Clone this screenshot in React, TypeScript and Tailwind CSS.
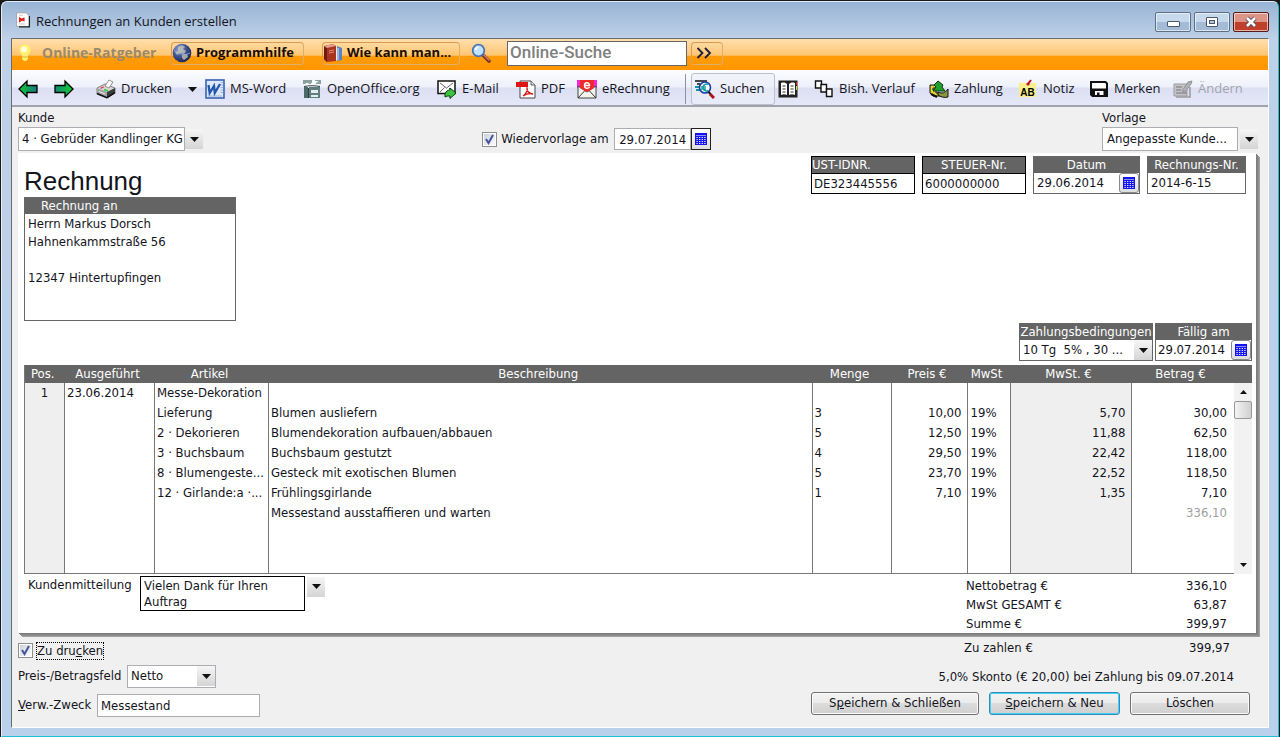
import type { ReactNode } from "react";
import { clsx } from "clsx";

/* ── Icons ── */

function Svg({ children, className = "h-5 w-5" }: { children: ReactNode; className?: string }) {
  return (
    <svg viewBox="0 0 20 20" className={clsx("shrink-0", className)} aria-hidden="true">
      {children}
    </svg>
  );
}

function Caret({ className = "h-[5px] w-[9px]" }: { className?: string }) {
  return (
    <svg viewBox="0 0 9 5" className={clsx("shrink-0", className)} aria-hidden="true">
      <path d="M0 0h9L4.5 5z" fill="#111" />
    </svg>
  );
}

const WindowIcon = () => (
  <Svg className="h-4 w-4">
    <path d="M2 1h12l4 4v13H2z" fill="#fff" stroke="#999" />
    <path d="M18 5v13.500H5" fill="none" stroke="#222" strokeWidth="1.6" />
    <path d="M5 6l3 2 4-1v5l-3-1-4 2z" fill="#d22" />
    <path d="M5 15h8M5 4h5" stroke="#bbb" />
  </Svg>
);

const BulbIcon = () => (
  <Svg>
    <circle cx="9" cy="7" r="5.500" fill="#fff36b" />
    <circle cx="8" cy="6.500" r="3" fill="#fffde0" />
    <path d="M6 11h6v5l-2 2H8l-2-2z" fill="#fbf07a" />
    <path d="M6 14h6" stroke="#e0b52c" />
  </Svg>
);

const GlobeIcon = () => (
  <Svg>
    <defs>
      <radialGradient id="globe" cx="0.35" cy="0.3" r="0.8">
        <stop offset="0" stopColor="#8fa4dd" />
        <stop offset="0.5" stopColor="#3f4f8c" />
        <stop offset="1" stopColor="#151d4a" />
      </radialGradient>
    </defs>
    <circle cx="10" cy="10" r="9.3" fill="url(#globe)" />
    <path d="M6 4l4-2 3 2-2 2 3 2-2 3-4-1-3 2-2-3 3-1zM10 12l5-1 1 3-4 3-2-2z" fill="#c9c9b4" opacity="0.75" />
    <path d="M2 7c4 4 11 6 16 3" fill="none" stroke="#9fb0e8" strokeWidth="0.8" />
  </Svg>
);

const BooksIcon = () => (
  <Svg>
    <path d="M1 3l9-2 3 2v15l-9 1-3-3z" fill="#a8331f" />
    <path d="M1 3l3 2v14l-3-3z" fill="#6e1c10" />
    <path d="M1 3l9-2 3 2-9 2z" fill="#e0a08b" />
    <path d="M13 4l1-1v14l-1 1z" fill="#f3e7d8" />
    <path d="M14 3l5 2v12l-5 1z" fill="#5b83c4" />
    <path d="M15 5v12" stroke="#dbe6f7" />
    <path d="M6 8l5-1M6 10l5-1" stroke="#d98f7c" />
  </Svg>
);

const MagnifierIcon = () => (
  <Svg>
    <path d="M12 12l6 6" stroke="#7a3428" strokeWidth="3.6" strokeLinecap="round" />
    <path d="M13 12l5 5" stroke="#d88a70" strokeWidth="1.2" strokeLinecap="round" />
    <circle cx="7.5" cy="7.5" r="5.8" fill="#bfe4fb" stroke="#4c74b5" strokeWidth="1.8" />
    <path d="M4.5 7a3.4 3.4 0 0 1 3-3" fill="none" stroke="#fff" strokeWidth="1.6" />
  </Svg>
);

const ArrowIcon = ({ flip }: { flip?: boolean }) => (
  <Svg>
    <defs>
      <linearGradient id={flip ? "arrowR" : "arrowL"} x1="0" y1="0" x2="1" y2="0">
        <stop offset="0" stopColor={flip ? "#148a78" : "#12c832"} />
        <stop offset="1" stopColor={flip ? "#12d030" : "#147a80"} />
      </linearGradient>
    </defs>
    <path
      d={flip ? "M19 10L11 2v4.5H1v7h10V18z" : "M1 10l8-8v4.5h10v7H9V18z"}
      fill={flip ? "url(#arrowR)" : "url(#arrowL)"}
      stroke="#000"
      strokeWidth="1.3"
    />
  </Svg>
);

const PrinterIcon = () => (
  <Svg>
    <path d="M1 9l8-4 10 4v5l-8 5-10-4z" fill="#d6d6d6" stroke="#666" strokeWidth="0.8" />
    <path d="M1 9l10 4v5L1 14z" fill="#a2a2a2" />
    <path d="M11 13l8-4v5l-8 5z" fill="#3b3b3b" />
    <path d="M1 14.500l10 4.200 8-5" fill="none" stroke="#111" strokeWidth="1.4" />
    <path d="M9 7l4-6 4 2-4 6z" fill="#fff" stroke="#777" strokeWidth="0.8" />
    <path d="M4 9l3-1.500 1.500.6-3 1.700z" fill="#e33" />
    <path d="M8 10.500l4 1.500" stroke="#2c4" strokeWidth="1.6" />
    <path d="M3 12.500l6 2.500" stroke="#eee" strokeWidth="1" />
  </Svg>
);

const WordIcon = () => (
  <Svg>
    <rect x="1" y="1" width="18" height="18" fill="#dde8f8" stroke="#3a62b0" strokeWidth="1.6" />
    <path d="M15.500 3.500h2.500M15.500 6h2.500M15.500 8.500h2.500M15.500 11h2.500M15.500 13.500h2.500M3 17h14" stroke="#9db4df" />
    <path d="M3.500 6l1.200 8L9 7l.8 7L15 5" fill="none" stroke="#2456ae" strokeWidth="2.300" />
  </Svg>
);

const OpenOfficeIcon = () => (
  <Svg>
    <path d="M1 1h9v4H1zM13 1h6v4h-5z" fill="#8aa19d" />
    <path d="M2 6c3-3 5-2 6 0 2-4 6-5 9-3-2 0-4 1-5 3 2 0 4 0 6 1-4 0-8 1-12 1z" fill="#fff" />
    <path d="M2 8h4v11H2z" fill="#4c6a68" />
    <path d="M7 8h11v11H7z" fill="#5f7f7c" />
    <path d="M9 11h7v3H9zM9 16h7v2H9z" fill="#e6eeed" />
    <path d="M2 7.500c4-1 12-1 16 0M6.500 9v10" fill="none" stroke="#27403f" />
  </Svg>
);

const MailIcon = () => (
  <Svg>
    <rect x="1" y="2" width="17" height="12.500" fill="#fff" stroke="#111" strokeWidth="1.500" />
    <path d="M3 4l6.500 5L16 4M3 13l4.500-4.500M16 13l-4-4" fill="none" stroke="#666" />
    <path d="M8 15c1-3 3-4 5-4V9l6 5-6 5.500V17c-2 0-3 0-5 1z" fill="#3fc441" stroke="#073a07" />
  </Svg>
);

const PdfIcon = () => (
  <Svg>
    <path d="M4 2h11l4 4v13H4z" fill="#fff" stroke="#444" />
    <path d="M15 2v4h4" fill="#ddd" stroke="#444" strokeWidth="0.8" />
    <path d="M0 3h12v5H0z" fill="#e01515" />
    <path d="M7 17c3-2 5-6 4-8-1 3 3 6 6 6-3-1-7 0-10 2z" fill="none" stroke="#d81818" strokeWidth="1.400" />
  </Svg>
);

const ERechnungIcon = () => (
  <Svg>
    <path d="M0 1h20v8H0z" fill="#f028d8" />
    <path d="M1 7l9 6 9-6v12H1z" fill="#f4f4ee" stroke="#444" />
    <path d="M3 1h14v8l-7 4-7-4z" fill="#ef2a2a" />
    <path d="M7.500 6.500h5c0-3.600-5-3.600-5 0s3.800 3.200 5 1.600" fill="none" stroke="#fff" strokeWidth="1.400" />
    <path d="M1 19l6.500-7M19 19l-6.500-7" stroke="#333" />
  </Svg>
);

const SearchEuroIcon = () => (
  <Svg>
    <path d="M0 2h12M2 5h3" stroke="#111" strokeWidth="1.500" />
    <path d="M0 8h5M1 11h4" stroke="#11989e" strokeWidth="1.800" />
    <circle cx="10" cy="8.500" r="5.500" fill="#fff" stroke="#1b3aa8" strokeWidth="1.600" />
    <path d="M13 5.500c-2-1-5 0-5 3s3 4 5 3M6 8h5M6 10h5" fill="none" stroke="#12a0a0" strokeWidth="1.500" />
    <path d="M13.500 13l2 2" stroke="#111" strokeWidth="2" />
    <path d="M15 15l4 4" stroke="#a81818" strokeWidth="3" />
  </Svg>
);

const BookIcon = () => (
  <Svg>
    <rect x="0.500" y="1.500" width="19" height="17" fill="#222" />
    <path d="M3 4c3-1 5 0 6 1v11c-2-1-4-1-6 0zM17 4c-3-1-5 0-6 1v11c2-1 4-1 6 0z" fill="#fff" />
    <path d="M4.500 7h3M4.500 10h3M4.500 13h3M12.500 7h3M12.500 10h3M12.500 13h3" stroke="#333" strokeWidth="1.200" />
    <path d="M18.500 3v3" stroke="#d22" />
    <path d="M18.500 7v4" stroke="#dd2" />
  </Svg>
);

const HistoryIcon = () => (
  <Svg>
    <path d="M1.500 2h6v7h-6z" fill="#fff" stroke="#111" strokeWidth="1.400" />
    <path d="M7 5.500h5.500v7.500H7z" fill="#fff" stroke="#111" strokeWidth="1.400" />
    <path d="M12.500 10H18v7.500h-5.500z" fill="#fff" stroke="#111" strokeWidth="1.400" />
  </Svg>
);

const PaymentIcon = () => (
  <Svg>
    <path d="M1 6h6v3H4v2h3v3h4l2 3H4l-3-3z" fill="#e6d338" stroke="#111" />
    <path d="M9 2l5 4-1 2 3 4H4l3-4-2-2z" fill="#1fa02c" stroke="#0a3a0e" />
    <path d="M9 13c4 2 7 1 10-3v8c-4 1-7 0-10-2z" fill="#8d9a3b" stroke="#111" />
    <path d="M2 15l6 3" stroke="#111" strokeWidth="2" />
  </Svg>
);

const NoteIcon = () => (
  <Svg>
    <rect x="1" y="4" width="17" height="14" fill="#f8f08a" />
    <path d="M13 1l-3 4" stroke="#c01228" strokeWidth="2" />
    <circle cx="10" cy="5" r="1.600" fill="#c01228" />
    <text x="9.500" y="16.500" textAnchor="middle" fontSize="10" fontWeight="700" fontFamily="Liberation Sans, sans-serif">
      AB
    </text>
  </Svg>
);

const DiskIcon = () => (
  <Svg>
    <path d="M2 3h14.500L18 4.500V17H3.500L2 15.500z" fill="#fff" stroke="#111" strokeWidth="2" />
    <path d="M3 9.500h14V17H3z" fill="#111" />
    <path d="M6 12h8.500v4H6z" fill="#fff" />
    <path d="M8 13.500h2.500V16H8z" fill="#111" />
  </Svg>
);

const EditIcon = () => (
  <Svg>
    <path d="M1 5h13v12H1z" fill="#c4c4c8" stroke="#9b9b9f" />
    <path d="M3 8h6M3 11h5M3 14h11" stroke="#8e8e92" strokeWidth="1.400" />
    <path d="M9 12l6-9 4-1-1 3-6 8z" fill="#b2b2b6" stroke="#939397" />
    <path d="M17 8v10H3" fill="none" stroke="#9b9b9f" strokeWidth="1.600" />
  </Svg>
);

const CalendarIcon = () => (
  <svg viewBox="0 0 12 12" className="h-3 w-3" aria-hidden="true">
    <rect width="12" height="12" fill="#1414f0" />
    <path
      d="M1.500 4.500h9M1.500 6.500h9M1.500 8.500h9M1.500 10.500h9"
      stroke="#fff"
      strokeDasharray="1.200 1.400"
      strokeWidth="1"
    />
    <path d="M1 2.500h10" stroke="#8f8fff" />
  </svg>
);

/* ── Form pieces ── */

function Select({ id, value, className }: { id: string; value: string; className?: string }) {
  return (
    <select id={id} className={clsx("appearance-none bg-white outline-none", className)}>
      <option>{value}</option>
    </select>
  );
}

function DropArrow({ label }: { label: string }) {
  return (
    <button
      type="button"
      aria-label={label}
      className="flex h-5 w-[18px] shrink-0 items-center justify-center bg-gradient-to-b from-[#f6f6f6] to-[#d4d4d4]"
    >
      <Caret />
    </button>
  );
}

function CalendarButton({ className }: { className?: string }) {
  return (
    <button
      type="button"
      aria-label="Kalender öffnen"
      className={clsx(
        "flex w-5 shrink-0 items-center justify-center border bg-gradient-to-b from-white to-[#dcdcdc]",
        className,
      )}
    >
      <CalendarIcon />
    </button>
  );
}

function CheckBox({ id }: { id: string }) {
  return (
    <span className="relative flex h-[15px] w-[15px] shrink-0">
      <input
        id={id}
        type="checkbox"
        defaultChecked
        className="h-full w-full appearance-none border border-[#8e8f8f] bg-gradient-to-br from-[#c9d0d8] to-white shadow-[inset_0_0_0_1px_#fff]"
      />
      <svg viewBox="0 0 15 15" className="pointer-events-none absolute inset-0" aria-hidden="true">
        <path d="M4 7l2.500 4L11 3" fill="none" stroke="#44549c" strokeWidth="2" />
      </svg>
    </span>
  );
}

type FieldBoxProps = {
  id: string;
  label: string;
  align?: string;
  border?: string;
  className: string;
  children: ReactNode;
};

function FieldBox({ id, label, align = "text-center", border = "border-[#666]", className, children }: FieldBoxProps) {
  return (
    <div className={clsx("border", border, className)}>
      <label htmlFor={id} className={clsx("block h-4 overflow-hidden bg-[#646464] leading-4 text-white", align)}>
        {label}
      </label>
      <div className="flex h-5 bg-white">{children}</div>
    </div>
  );
}

type ToolProps = { icon: ReactNode; label?: string; title?: string; className: string; disabled?: boolean };

function Tool({ icon, label, title, className, disabled }: ToolProps) {
  return (
    <button
      type="button"
      aria-label={title}
      disabled={disabled}
      className={clsx("flex h-8 shrink-0 items-center gap-[5px] whitespace-nowrap", disabled && "text-[#a4a5ab]", className)}
    >
      {icon}
      {label}
    </button>
  );
}

/* ── Data ── */

type Line = {
  pos?: string;
  date?: string;
  item?: string;
  text?: string;
  qty?: string;
  price?: string;
  rate?: string;
  tax?: string;
  total?: string;
  muted?: boolean;
};

const lines: Line[] = [
  { pos: "1", date: "23.06.2014", item: "Messe-Dekoration" },
  { item: "Lieferung", text: "Blumen ausliefern", qty: "3", price: "10,00", rate: "19%", tax: "5,70", total: "30,00" },
  { item: "2 · Dekorieren", text: "Blumendekoration aufbauen/abbauen", qty: "5", price: "12,50", rate: "19%", tax: "11,88", total: "62,50" },
  { item: "3 · Buchsbaum", text: "Buchsbaum gestutzt", qty: "4", price: "29,50", rate: "19%", tax: "22,42", total: "118,00" },
  { item: "8 · Blumengeste...", text: "Gesteck mit exotischen Blumen", qty: "5", price: "23,70", rate: "19%", tax: "22,52", total: "118,50" },
  { item: "12 · Girlande:a ·...", text: "Frühlingsgirlande", qty: "1", price: "7,10", rate: "19%", tax: "1,35", total: "7,10" },
  { text: "Messestand ausstaffieren und warten", total: "336,10", muted: true },
];

const columns = [
  { label: "Pos.", width: "w-10" },
  { label: "Ausgeführt", width: "w-[90px]" },
  { label: "Artikel", width: "w-[114px]" },
  { label: "Beschreibung", width: "" },
  { label: "Menge", width: "w-[79px]" },
  { label: "Preis €", width: "w-[76px]" },
  { label: "MwSt", width: "w-[43px]" },
  { label: "MwSt. €", width: "w-[121px]" },
  { label: "Betrag €", width: "w-[103px]" },
];

const totals = [
  ["Nettobetrag €", "336,10"],
  ["MwSt GESAMT €", "63,87"],
  ["Summe €", "399,97"],
];

/* ── Window parts ── */

const captionButton =
  "flex h-5 w-9 items-center justify-center rounded-[2px] border shadow-[inset_0_0_0_1px_rgba(255,255,255,0.6)]";
const captionBlue = "border-[#5c6f87] bg-[linear-gradient(#c6d8ec_50%,#a3bbd6_50%)]";

function TitleBar() {
  return (
    <header className="flex h-9 items-center px-[9px] pl-[13px] font-['Open_Sans','Noto_Sans',sans-serif] text-[13px]">
      <WindowIcon />
      <h1 className="ml-[5px] flex-1 pt-1">Rechnungen an Kunden erstellen</h1>
      <div className="flex gap-[3px] pt-1">
        <button type="button" aria-label="Minimieren" className={clsx(captionButton, captionBlue)}>
          <span className="mt-1 h-[6px] w-[13px] rounded-[1px] border border-[#4c5668] bg-white" />
        </button>
        <button type="button" aria-label="Maximieren" className={clsx(captionButton, captionBlue)}>
          <span className="flex h-[10px] w-3 items-center justify-center rounded-[1px] border border-[#4c5668] bg-white">
            <span className="h-1 w-[6px] border border-[#4c5668] bg-[#b4c8e0]" />
          </span>
        </button>
        <button
          type="button"
          aria-label="Schließen"
          className={clsx(captionButton, "border-[#5a1a14] bg-[linear-gradient(#dc9486_50%,#c0402c_50%)]")}
        >
          <svg viewBox="0 0 14 12" className="h-3 w-[14px]" aria-hidden="true">
            <path d="M3 2l8 8M11 2l-8 8" stroke="#4c4c5c" strokeWidth="4.500" />
            <path d="M3 2l8 8M11 2l-8 8" stroke="#fff" strokeWidth="2.600" />
          </svg>
        </button>
      </div>
    </header>
  );
}

const helpButton =
  "flex h-[23px] items-center gap-1 rounded-[4px] border border-[#dd9a52] border-b-[#dcae70] border-r-[#dcae70] text-[#1a0d00]";

function HelpBar() {
  return (
    <div className="flex h-[31px] items-center bg-[linear-gradient(#ffdfae_0%,#ffc673_52%,#ff9c08_56%,#ff9600_100%)] pl-1 pb-[3px] font-['Open_Sans','Noto_Sans',sans-serif] text-[13px] font-bold">
      <BulbIcon />
      <span className="ml-[6px] w-[129px] text-sm text-[#9a8a6c]">Online-Ratgeber</span>
      <button type="button" className={clsx(helpButton, "w-[133px]")}>
        <GlobeIcon />
        Programmhilfe
      </button>
      <button type="button" className={clsx(helpButton, "ml-[18px] w-[138px]")}>
        <BooksIcon />
        Wie kann man...
      </button>
      <span className="ml-[11px] mr-4">
        <MagnifierIcon />
      </span>
      <input
        type="search"
        aria-label="Online-Suche"
        placeholder="Online-Suche"
        className="h-[25px] w-[180px] border border-[#66666b] bg-white px-[2px] font-[Roboto,sans-serif] text-[17px] font-medium outline-none placeholder:text-[#808080]"
      />
      <button type="button" aria-label="Suche starten" className={clsx(helpButton, "ml-1 w-8 pl-1")}>
        <svg viewBox="0 0 16 12" className="h-3 w-4" aria-hidden="true">
          <path d="M1.500 1l5 5-5 5M9 1l5 5-5 5" fill="none" stroke="#1c1c3c" strokeWidth="1.800" />
        </svg>
      </button>
    </div>
  );
}

function ToolBar() {
  return (
    <nav
      aria-label="Werkzeuge"
      className="flex h-[37px] items-center border-b-2 border-[#a0a3ac] bg-[linear-gradient(#fdfdff_0%,#eef0fa_48%,#dcdff2_52%,#e4e8f8_100%)] pl-[6px] pt-[3px] font-['Open_Sans','Noto_Sans',sans-serif] text-[13px]"
    >
      <Tool icon={<ArrowIcon />} title="Zurück" className="w-9" />
      <Tool icon={<ArrowIcon flip />} title="Vor" className="w-[42px]" />
      <Tool icon={<PrinterIcon />} label="Drucken" className="w-[92px]" />
      <Tool icon={<Caret />} title="Druckoptionen" className="w-[17px]" />
      <Tool icon={<WordIcon />} label="MS-Word" className="w-[97px]" />
      <Tool icon={<OpenOfficeIcon />} label="OpenOffice.org" className="w-[135px]" />
      <Tool icon={<MailIcon />} label="E-Mail" className="w-[79px]" />
      <Tool icon={<PdfIcon />} label="PDF" className="w-[61px]" />
      <Tool icon={<ERechnungIcon />} label="eRechnung" className="w-[108px]" />
      <span className="h-[30px] w-px bg-[#8d919c]" />
      <Tool
        icon={<SearchEuroIcon />}
        label="Suchen"
        className="ml-[5px] w-[84px] rounded-[3px] border border-[#bcbfcc] bg-[#eceef8]/60 pl-[3px]"
      />
      <Tool icon={<BookIcon />} title="Adressbuch" className="ml-[3px] w-9" />
      <Tool icon={<HistoryIcon />} label="Bish. Verlauf" className="w-[115px]" />
      <Tool icon={<PaymentIcon />} label="Zahlung" className="w-[89px]" />
      <Tool icon={<NoteIcon />} label="Notiz" className="w-[71px]" />
      <Tool icon={<DiskIcon />} label="Merken" className="w-[84px]" />
      <Tool icon={<EditIcon />} label="Ändern" className="w-20" disabled />
    </nav>
  );
}

function CustomerRow() {
  return (
    <section className="flex items-end pl-[6px] pr-[10px] pt-[3px]">
      <div>
        <label htmlFor="kunde" className="block leading-4">
          Kunde
        </label>
        <div className="mt-px flex items-center">
          <Select id="kunde" value="4 · Gebrüder Kandlinger KG" className="h-6 w-[167px] border border-[#abadb3] pl-[3px]" />
          <DropArrow label="Kunden anzeigen" />
        </div>
      </div>
      <div className="flex-[5]" />
      <div className="flex h-6 items-center">
        <CheckBox id="wiedervorlage" />
        <label htmlFor="wiedervorlage" className="ml-1 w-[113px] whitespace-nowrap">
          Wiedervorlage am
        </label>
        <input
          aria-label="Wiedervorlage Datum"
          defaultValue="29.07.2014"
          className="h-[22px] w-[77px] border border-[#abadb3] bg-white px-1 outline-none"
        />
        <CalendarButton className="h-[22px] border-[#222]" />
      </div>
      <div className="flex-[7]" />
      <div>
        <label htmlFor="vorlage" className="block leading-4">
          Vorlage
        </label>
        <div className="mt-px flex items-center gap-[2px]">
          <Select id="vorlage" value="Angepasste Kunde..." className="h-6 w-[136px] border border-[#abadb3] px-1" />
          <DropArrow label="Vorlagen anzeigen" />
        </div>
      </div>
    </section>
  );
}

function PaperHead() {
  return (
    <div className="flex justify-between">
      <div className="w-[212px]">
        <h2 className="h-11 pt-2 font-['Liberation_Sans',Arial,sans-serif] text-[26px] leading-10">Rechnung</h2>
        <div className="border border-[#666]">
          <label htmlFor="adresse" className="block h-4 bg-[#646464] pl-4 leading-4 text-white">
            Rechnung an
          </label>
          <textarea
            id="adresse"
            defaultValue={"Herrn Markus Dorsch\nHahnenkammstraße 56\n\n12347 Hintertupfingen"}
            className="block h-[106px] w-full resize-none overflow-hidden bg-white px-[3px] py-px leading-[18px] outline-none"
          />
        </div>
      </div>

      <div className="flex flex-col items-end">
        <div className="mr-[6px] mt-[3px] flex gap-[7px]">
          <FieldBox id="ustid" label="UST-IDNR." align="text-left" border="border-black" className="w-[104px]">
            <input id="ustid" defaultValue="DE323445556" className="w-full border-t border-black px-[2px] outline-none" />
          </FieldBox>
          <FieldBox id="steuer" label="STEUER-Nr." border="border-black" className="w-[104px]">
            <input id="steuer" defaultValue="6000000000" className="w-full border-t border-black px-[2px] outline-none" />
          </FieldBox>
          <FieldBox id="datum" label="Datum" className="w-[107px]">
            <input id="datum" defaultValue="29.06.2014" className="min-w-0 flex-1 px-[3px] outline-none" />
            <CalendarButton className="h-5 rounded-[3px] border-[#8a8a8a]" />
          </FieldBox>
          <FieldBox id="renr" label="Rechnungs-Nr." className="w-[99px]">
            <input id="renr" defaultValue="2014-6-15" className="w-full px-[3px] outline-none" />
          </FieldBox>
        </div>

        <div className="mt-[129px] flex gap-[2px]">
          <FieldBox id="zahlung" label="Zahlungsbedingungen" className="w-[134px]">
            <Select id="zahlung" value={"10 Tg\u00a0 5% , 30 ..."} className="min-w-0 flex-1 pl-[3px]" />
            <DropArrow label="Zahlungsbedingungen anzeigen" />
          </FieldBox>
          <FieldBox id="faellig" label="Fällig am" className="w-[97px]">
            <input id="faellig" defaultValue="29.07.2014" className="min-w-0 flex-1 px-[2px] outline-none" />
            <CalendarButton className="h-5 rounded-[3px] border-[#8a8a8a]" />
          </FieldBox>
        </div>
      </div>
    </div>
  );
}

function LineTable() {
  const cell = "h-5 overflow-hidden border-r border-[#777] px-[2px] whitespace-nowrap";

  return (
    <div className="mt-1 flex">
      <table className="flex-1 table-fixed border-collapse border-b border-l border-[#777]">
        <colgroup>
          {columns.map((c) => (
            <col key={c.label} className={c.width} />
          ))}
        </colgroup>
        <thead>
          <tr className="h-[18px] bg-[#646464] text-white">
            {columns.map((c) => (
              <th key={c.label} className="p-0 pr-1 font-normal leading-4">
                {c.label}
              </th>
            ))}
          </tr>
        </thead>
        <tbody>
          {lines.map((l, i) => (
            <tr key={i} className="leading-5">
              <td className={clsx(cell, "bg-[#efefef] text-center")}>{l.pos}</td>
              <td className={cell}>{l.date}</td>
              <td className={cell}>{l.item}</td>
              <td className={cell}>{l.text}</td>
              <td className={cell}>{l.qty}</td>
              <td className={clsx(cell, "pr-[5px] text-right")}>{l.price}</td>
              <td className={clsx(cell, "pl-[3px]")}>{l.rate}</td>
              <td className={clsx(cell, "bg-[#efefef] pr-[5px] text-right")}>{l.tax}</td>
              <td className={clsx("pr-[7px] text-right", l.muted && "text-[#a0a0a0]")}>{l.total}</td>
            </tr>
          ))}
          <tr className="h-[50px]">
            {columns.map((c, i) => (
              <td
                key={c.label}
                className={clsx("p-0", i < 8 && "border-r border-[#777]", (i === 0 || i === 7) && "bg-[#efefef]")}
              />
            ))}
          </tr>
        </tbody>
      </table>

      {/* Scrollbar */}
      <div className="flex w-[18px] flex-col bg-[#f2f2f2]">
        <div className="h-[18px] bg-[#646464]" />
        <button type="button" aria-label="Nach oben" className="flex h-[18px] items-center justify-center">
          <Caret className="h-1 w-[7px] rotate-180" />
        </button>
        <div className="h-[18px] rounded-[2px] border border-[#979797] bg-gradient-to-r from-[#f4f4f4] to-[#cfcfcf]" />
        <div className="flex-1" />
        <button type="button" aria-label="Nach unten" className="flex h-[18px] items-center justify-center">
          <Caret className="h-1 w-[7px]" />
        </button>
      </div>
    </div>
  );
}

function PaperFoot() {
  return (
    <div className="flex h-[59px] items-start pt-[2px]">
      <label htmlFor="mitteilung" className="w-[116px] pl-1 leading-[18px]">
        Kundenmitteilung
      </label>
      <textarea
        id="mitteilung"
        defaultValue="Vielen Dank für Ihren Auftrag"
        className="h-[35px] w-[165px] resize-none overflow-hidden border border-black bg-white px-[3px] py-px leading-4 outline-none"
      />
      <div className="ml-[2px] mt-px">
        <DropArrow label="Mitteilungen anzeigen" />
      </div>
      <dl className="ml-auto mr-[25px] w-[261px] leading-[19px]">
        {totals.map(([label, value]) => (
          <div key={label} className="flex justify-between">
            <dt>{label}</dt>
            <dd>{value}</dd>
          </div>
        ))}
      </dl>
    </div>
  );
}

const footButton =
  "h-[23px] rounded-[3px] border bg-[linear-gradient(#f3f3f3_0%,#ebebeb_50%,#dcdcdc_50%,#cfcfcf_100%)]";
const plainEdge = "border-[#707070] shadow-[inset_0_0_0_1px_#fbfbfb]";
const defaultEdge = "border-[#2f8db8] shadow-[inset_0_0_0_1px_#46d0f5]";

function FormFoot() {
  return (
    <section className="flex justify-between pl-[6px] pr-[18px] pb-[10px] pt-[7px]">
      <div className="pt-px">
        <div className="flex h-5 items-center gap-1">
          <CheckBox id="drucken" />
          <label htmlFor="drucken" className="outline-1 outline-dotted outline-black leading-4">
            Zu dru<u>c</u>ken
          </label>
        </div>
        <div className="mt-1 flex items-center">
          <label htmlFor="preisfeld" className="w-[109px] whitespace-nowrap">
            Preis-/Betragsfeld
          </label>
          <div className="flex h-[23px] w-[89px] items-center border border-[#abadb3] bg-white">
            <Select id="preisfeld" value="Netto" className="min-w-0 flex-1 px-[3px]" />
            <DropArrow label="Optionen anzeigen" />
          </div>
        </div>
        <div className="mt-[6px] flex items-center">
          <label htmlFor="zweck" className="w-[79px] whitespace-nowrap">
            <u>V</u>erw.-Zweck
          </label>
          <input
            id="zweck"
            defaultValue="Messestand"
            className="h-[23px] w-[163px] border border-[#abadb3] bg-white px-[3px] outline-none"
          />
        </div>
      </div>

      <div className="flex flex-col items-end">
        <dl className="mr-5 flex w-[266px] justify-between leading-4">
          <dt>Zu zahlen €</dt>
          <dd>399,97</dd>
        </dl>
        <p className="mr-4 mt-[13px] leading-4">5,0% Skonto (€ 20,00) bei Zahlung bis 09.07.2014</p>
        <div className="mt-[7px] flex gap-[10px]">
          <button type="button" className={clsx(footButton, plainEdge, "w-[168px]")}>
            S<u>p</u>eichern &amp; Schließen
          </button>
          <button type="button" className={clsx(footButton, defaultEdge, "w-[131px]")}>
            <u>S</u>peichern &amp; Neu
          </button>
          <button type="button" className={clsx(footButton, plainEdge, "w-[120px]")}>
            Löschen
          </button>
        </div>
      </div>
    </section>
  );
}

export default function App() {
  return (
    <div className="flex min-h-screen flex-col bg-[#1a1a1a] p-px font-['DejaVu_Sans_Condensed','DejaVu_Sans',sans-serif] text-[13px] text-[#14141c]">
      <div className="flex flex-1 flex-col rounded-t-[6px] border border-[#e4eef8] border-b-[#1fc0d0] border-r-[#1fc0d0] bg-[linear-gradient(#98b4d4_0px,#bdd1e8_36px,#b9d1ea_100%)]">
        <TitleBar />
        <div className="ml-[9px] mr-[9px] mb-2 flex flex-1 flex-col border border-[#6c6c70] border-b-white border-r-white bg-[#f0f0f0]">
          <HelpBar />
          <ToolBar />
          <CustomerRow />
          <main className="ml-[6px] mr-3 mt-[2px] bg-white pl-[6px] pr-1 shadow-[1px_1px_0_#7c7c7c,2px_2px_0_#858585,3px_3px_0_#8f8f8f,4px_4px_0_#a0a0a0]">
            <PaperHead />
            <LineTable />
            <PaperFoot />
          </main>
          <FormFoot />
        </div>
      </div>
    </div>
  );
}
